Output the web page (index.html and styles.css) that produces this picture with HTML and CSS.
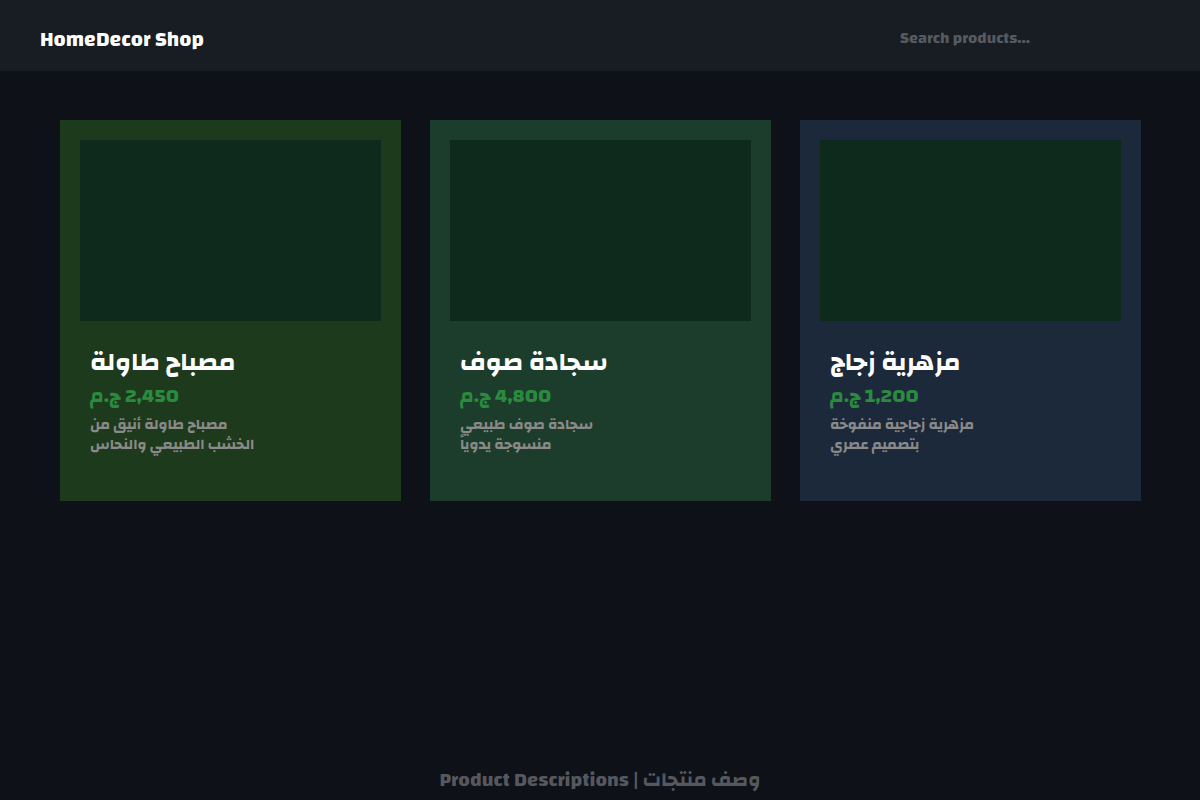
FILE: index.html
```html
<!DOCTYPE html>
<html lang="ar">
<head>
    <meta charset="UTF-8">
    <meta name="viewport" content="width=device-width, initial-scale=1.0">
    <title>HomeDecor Shop</title>
    <link rel="stylesheet" href="styles.css">
</head>
<body>
    <header class="topbar">
        <div class="brand">HomeDecor Shop</div>
        <input class="search" type="text" placeholder="Search products...">
    </header>

    <main class="products">
        <div class="card card-lamp">
            <div class="thumb"></div>
            <div class="info" dir="rtl">
                <h2 class="name">مصباح طاولة</h2>
                <div class="price">2,450 ج.م</div>
                <p class="desc">مصباح طاولة أنيق من الخشب الطبيعي والنحاس</p>
            </div>
        </div>
        <div class="card card-rug">
            <div class="thumb"></div>
            <div class="info" dir="rtl">
                <h2 class="name">سجادة صوف</h2>
                <div class="price">4,800 ج.م</div>
                <p class="desc">سجادة صوف طبيعي منسوجة يدوياً</p>
            </div>
        </div>
        <div class="card card-vase">
            <div class="thumb"></div>
            <div class="info" dir="rtl">
                <h2 class="name">مزهرية زجاج</h2>
                <div class="price">1,200 ج.م</div>
                <p class="desc">مزهرية زجاجية منفوخة بتصميم عصري</p>
            </div>
        </div>
    </main>

    <footer class="footer">Product Descriptions | وصف منتجات</footer>
</body>
</html>
```

FILE: styles.css
```css
* {
    box-sizing: border-box;
}
body {
    margin: 0;
    min-height: 800px;
    display: flex;
    flex-direction: column;
    background: #0e1118;
    font-family: "Changa", "Noto Kufi Arabic", "Cairo", "Noto Sans", sans-serif;
    font-weight: 700;
    color: #fff;
}
.topbar {
    height: 71px;
    background: #181c23;
    display: flex;
    align-items: center;
    justify-content: space-between;
    padding: 8px 40px 0;
}
.brand {
    font-size: 21px;
    font-weight: 700;
}
.search {
    width: 220px;
    margin-right: 40px;
    background: transparent;
    border: none;
    outline: none;
    font-family: inherit;
    font-weight: 700;
    font-size: 16px;
    color: #ccc;
    padding: 0;
    margin-top: -4px;
}
.search::placeholder {
    color: #555a60;
}
.products {
    display: grid;
    grid-template-columns: repeat(3, 341px);
    gap: 29px;
    padding: 49px 60px 0;
    flex: 1;
    align-content: start;
}
.card {
    height: 381px;
    padding: 20px;
}
.card-lamp { background: #1e3a1c; }
.card-rug { background: #1c3d2b; }
.card-vase { background: #1c293b; }
.thumb {
    height: 181px;
    background: #0e2a1c;
}
.info {
    padding: 21px 10px 0;
    text-align: left;
}
.name {
    margin: 0;
    font-size: 25.5px;
    line-height: 42px;
    color: #fff;
}
.price {
    font-size: 20px;
    line-height: 24px;
    color: #2a8a3e;
}
.desc {
    margin: 7px auto 0 0;
    max-width: 170px;
    font-size: 14.6px;
    line-height: 20px;
    color: #8a8a8a;
}
.footer {
    text-align: center;
    font-size: 20px;
    line-height: 24px;
    color: #55585e;
    padding-bottom: 8px;
}
```
